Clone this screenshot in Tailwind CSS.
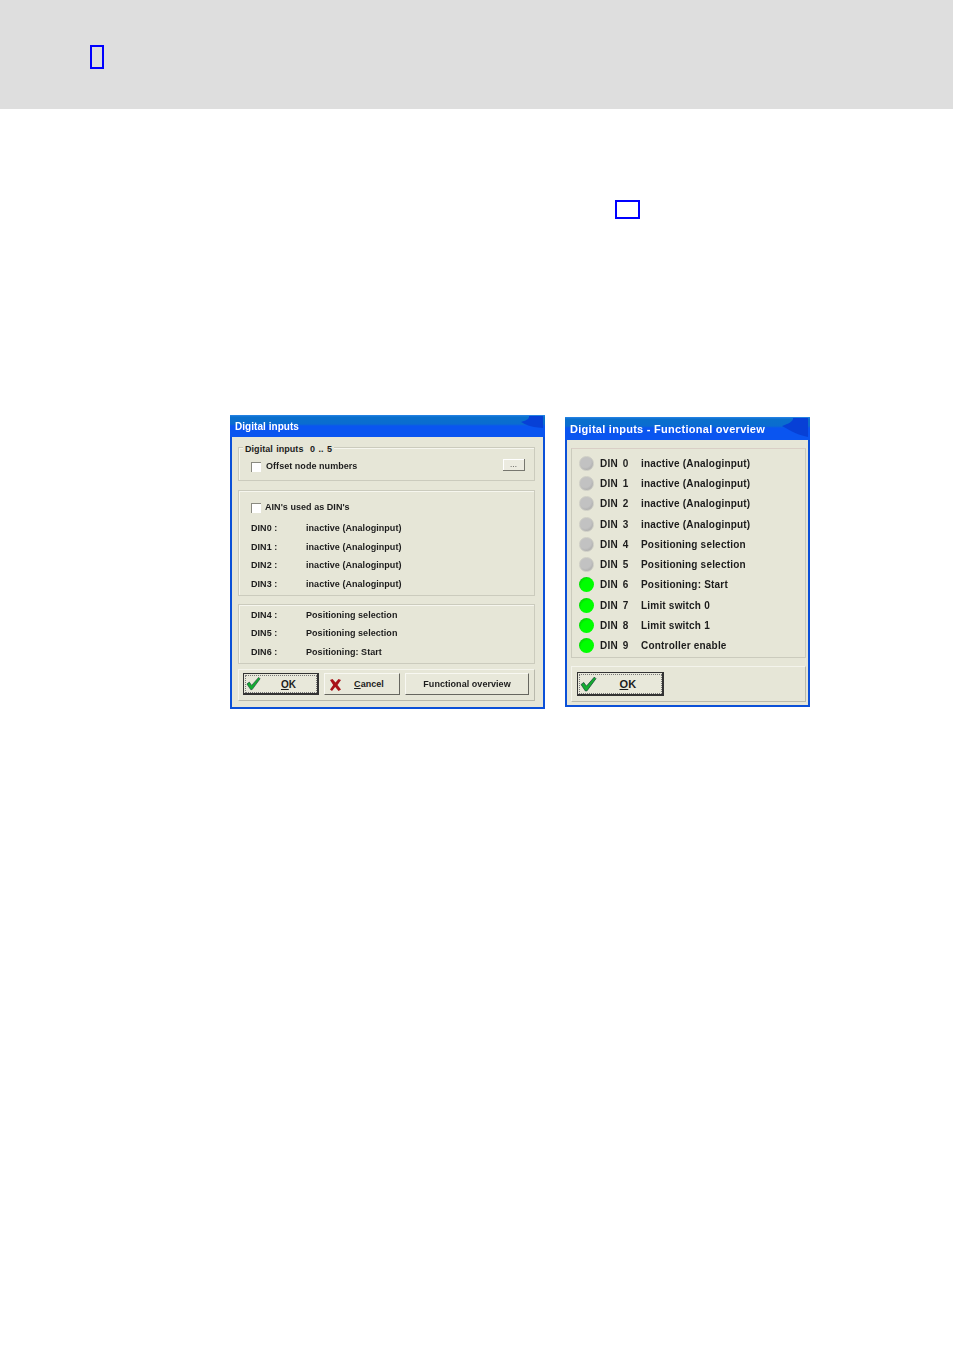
<!DOCTYPE html>
<html lang="en">
<head>
    <meta charset="UTF-8">
    <meta name="viewport" content="width=device-width, initial-scale=1.0">
    <title>Digital inputs</title>
    <script src="https://cdn.jsdelivr.net/npm/@tailwindcss/browser@4"></script>
</head>
<body class="bg-white h-[1348px] overflow-hidden font-['Liberation_Sans',sans-serif]">
    <header class="h-[109px] bg-[#dedede] pt-[45px] pl-[90px]">
        <div class="w-[14px] h-[24px] border-2 border-[#0000ff]"></div>
    </header>
    <div class="mt-[91px] ml-[615px] w-[25px] h-[19px] border-2 border-[#0000ff]"></div>

    <main class="mt-[196px] ml-[230px] flex items-start gap-[20px] font-bold text-[#1c1c1c] blur-[0.4px]">
        <!-- left dialog -->
        <section class="w-[315px] h-[294px] border-2 border-t-0 border-[#0b50d8] bg-[#e6e6d7] flex flex-col text-[9px] tracking-[0.005em]">
            <div class="relative h-[22px] shrink-0 -mx-[2px] bg-[linear-gradient(#2a86ea_0,#0a70cc_2px,#0a6cd0_9px,#0a55f0_11px,#0a55f0_100%)] pl-[5px] pt-[1px] flex items-center overflow-hidden text-white text-[10px]">
                Digital inputs
                <svg class="absolute right-0 top-0" width="26" height="22" viewBox="0 0 26 22"><path d="M24 1H10C11 4 6 6 2 7C6 9 10 12 24 13Z" fill="#0740d6"/></svg>
            </div>
            <div class="flex-1 pl-[6px] pr-[8px] pt-[10px] flex flex-col">
                <div class="relative h-[34px] border border-[#cbcbbd] shadow-[inset_1px_1px_0_#f6f6ee] flex items-center pl-[12px] pr-[9px] pt-[6px]">
                    <span class="absolute left-[4px] -top-[5px] bg-[#e6e6d7] px-[2px] leading-[12px] whitespace-pre [word-spacing:0.8px]">Digital inputs  0 .. 5</span>
                    <span class="w-[10px] h-[10px] bg-white border-t border-l border-[#8a8a80]"></span>
                    <span class="ml-[5px]">Offset node numbers</span>
                    <span class="ml-auto -mt-[4px] w-[22px] h-[12px] bg-[#ecebe0] border-r border-b border-[#77776f] shadow-[inset_1px_1px_0_#fff] flex items-center justify-center leading-[8px] text-[8px] font-normal">...</span>
                </div>
                <div class="mt-[9px] h-[106px] border border-[#cbcbbd] shadow-[inset_1px_1px_0_#f6f6ee] pl-[12px] pt-[12px] flex flex-col">
                    <div class="h-[10px] flex items-center">
                        <span class="w-[10px] h-[10px] bg-white border-t border-l border-[#8a8a80]"></span>
                        <span class="ml-[4px]">AIN's used as DIN's</span>
                    </div>
                    <div class="mt-[7px] flex h-[18.4px] items-center"><span class="w-[55px]">DIN0 :</span><span>inactive (Analoginput)</span></div>
                    <div class="flex h-[18.4px] items-center"><span class="w-[55px]">DIN1 :</span><span>inactive (Analoginput)</span></div>
                    <div class="flex h-[18.4px] items-center"><span class="w-[55px]">DIN2 :</span><span>inactive (Analoginput)</span></div>
                    <div class="flex h-[18.4px] items-center"><span class="w-[55px]">DIN3 :</span><span>inactive (Analoginput)</span></div>
                </div>
                <div class="mt-[8px] h-[60px] border border-[#cbcbbd] shadow-[inset_1px_1px_0_#f6f6ee] pl-[12px] pt-[1.5px] flex flex-col">
                    <div class="flex h-[18.4px] items-center"><span class="w-[55px]">DIN4 :</span><span>Positioning selection</span></div>
                    <div class="flex h-[18.4px] items-center"><span class="w-[55px]">DIN5 :</span><span>Positioning selection</span></div>
                    <div class="flex h-[18.4px] items-center"><span class="w-[55px]">DIN6 :</span><span>Positioning: Start</span></div>
                </div>
                <div class="mt-[5px] h-[32px] border border-[#f4f4ec] border-r-[#b9b9ac] border-b-[#b9b9ac] pl-[4px] pt-[3px] flex gap-[5px]">
                    <button class="relative w-[76px] h-[22px] pt-[1px] bg-[#e8e8da] border border-[#333] border-r-2 border-b-2 font-bold text-[10px] outline-1 -outline-offset-3 outline-dotted outline-[#777]">
                        <svg class="absolute left-[2px] top-[2px]" width="15" height="15" viewBox="0 0 16 15"><path d="M1 8L3.5 6L6 9.5L13.5 1L15 2.5L6.5 14H5Z" fill="#14ad30" stroke="#17453a" stroke-width="0.7"/></svg>
                        <span class="ml-[16px] underline">O</span><span>K</span>
                    </button>
                    <button class="relative w-[76px] h-[22px] pt-[1px] bg-[#e8e8da] border border-[#f8f8f2] border-r-[#66665f] border-b-[#66665f] font-bold">
                        <svg class="absolute left-[4px] top-[4px]" width="13" height="14" viewBox="0 0 13 13"><path d="M1 1.5L3.5 0.5L6.5 4L9.5 0.5L12 1.5L8.5 6.5L12 11L9.5 12.5L6.2 8.5L3 12.5L1 11L4.2 6.5Z" fill="#a81219"/></svg>
                        <span class="ml-[14px]"><span class="underline">C</span>ancel</span>
                    </button>
                    <button class="w-[124px] h-[22px] pt-[1px] bg-[#e8e8da] border border-[#f8f8f2] border-r-[#66665f] border-b-[#66665f] font-bold">Functional overview</button>
                </div>
            </div>
        </section>

        <!-- right dialog -->
        <section class="mt-[2px] w-[245px] h-[290px] border-2 border-t-0 border-[#0b50d8] bg-[#e6e6d7] flex flex-col text-[10px] tracking-[0.02em]">
            <div class="relative h-[23px] shrink-0 -mx-[2px] bg-[linear-gradient(#2a86ea_0,#0a70cc_2px,#0a6cd0_9px,#0a55f0_11px,#0a55f0_100%)] pl-[5px] pt-[2px] flex items-center overflow-hidden text-white text-[11px] tracking-[0.025em]">
                Digital inputs - Functional overview
                <svg class="absolute right-0 top-0" width="30" height="23" viewBox="0 0 30 23"><path d="M28 1H13C14 4 8 7 2 9C8 12 14 17 28 20Z" fill="#0740d6"/></svg>
            </div>
            <div class="flex-1 pl-[4px] pr-[2px] pt-[8px] flex flex-col">
                <div class="h-[210px] border border-[#cbcbbd] border-t-[#d9cfc6] pl-[7px] pt-[4px] flex flex-col">
                    <div class="flex h-[20.3px] items-center"><span class="w-[15px] h-[15px] rounded-full bg-[radial-gradient(circle_at_40%_35%,#c2c2c2_50%,#9e9e9e_100%)] border border-[#cdcdc5]"></span><span class="ml-[6px] w-[41px] [word-spacing:2px]">DIN 0</span><span>inactive (Analoginput)</span></div>
                    <div class="flex h-[20.3px] items-center"><span class="w-[15px] h-[15px] rounded-full bg-[radial-gradient(circle_at_40%_35%,#c2c2c2_50%,#9e9e9e_100%)] border border-[#cdcdc5]"></span><span class="ml-[6px] w-[41px] [word-spacing:2px]">DIN 1</span><span>inactive (Analoginput)</span></div>
                    <div class="flex h-[20.3px] items-center"><span class="w-[15px] h-[15px] rounded-full bg-[radial-gradient(circle_at_40%_35%,#c2c2c2_50%,#9e9e9e_100%)] border border-[#cdcdc5]"></span><span class="ml-[6px] w-[41px] [word-spacing:2px]">DIN 2</span><span>inactive (Analoginput)</span></div>
                    <div class="flex h-[20.3px] items-center"><span class="w-[15px] h-[15px] rounded-full bg-[radial-gradient(circle_at_40%_35%,#c2c2c2_50%,#9e9e9e_100%)] border border-[#cdcdc5]"></span><span class="ml-[6px] w-[41px] [word-spacing:2px]">DIN 3</span><span>inactive (Analoginput)</span></div>
                    <div class="flex h-[20.3px] items-center"><span class="w-[15px] h-[15px] rounded-full bg-[radial-gradient(circle_at_40%_35%,#c2c2c2_50%,#9e9e9e_100%)] border border-[#cdcdc5]"></span><span class="ml-[6px] w-[41px] [word-spacing:2px]">DIN 4</span><span>Positioning selection</span></div>
                    <div class="flex h-[20.3px] items-center"><span class="w-[15px] h-[15px] rounded-full bg-[radial-gradient(circle_at_40%_35%,#c2c2c2_50%,#9e9e9e_100%)] border border-[#cdcdc5]"></span><span class="ml-[6px] w-[41px] [word-spacing:2px]">DIN 5</span><span>Positioning selection</span></div>
                    <div class="flex h-[20.3px] items-center"><span class="w-[15px] h-[15px] rounded-full bg-[radial-gradient(circle_at_62%_65%,#00ff00_52%,#0aa80a_100%)]"></span><span class="ml-[6px] w-[41px] [word-spacing:2px]">DIN 6</span><span>Positioning: Start</span></div>
                    <div class="flex h-[20.3px] items-center"><span class="w-[15px] h-[15px] rounded-full bg-[radial-gradient(circle_at_62%_65%,#00ff00_52%,#0aa80a_100%)]"></span><span class="ml-[6px] w-[41px] [word-spacing:2px]">DIN 7</span><span>Limit switch 0</span></div>
                    <div class="flex h-[20.3px] items-center"><span class="w-[15px] h-[15px] rounded-full bg-[radial-gradient(circle_at_62%_65%,#00ff00_52%,#0aa80a_100%)]"></span><span class="ml-[6px] w-[41px] [word-spacing:2px]">DIN 8</span><span>Limit switch 1</span></div>
                    <div class="flex h-[20.3px] items-center"><span class="w-[15px] h-[15px] rounded-full bg-[radial-gradient(circle_at_62%_65%,#00ff00_52%,#0aa80a_100%)]"></span><span class="ml-[6px] w-[41px] [word-spacing:2px]">DIN 9</span><span>Controller enable</span></div>
                </div>
                <div class="mt-[8px] h-[36px] border border-[#f4f4ec] border-r-[#b9b9ac] border-b-[#b9b9ac] pl-[5px] pt-[5px]">
                    <button class="relative w-[87px] h-[24px] pt-[1px] bg-[#e8e8da] border border-[#333] border-r-2 border-b-2 font-bold text-[11px] outline-1 -outline-offset-3 outline-dotted outline-[#777]">
                        <svg class="absolute left-[2px] top-[3px]" width="17" height="16" viewBox="0 0 16 15"><path d="M1 8L3.5 6L6 9.5L13.5 1L15 2.5L6.5 14H5Z" fill="#14ad30" stroke="#17453a" stroke-width="0.7"/></svg>
                        <span class="ml-[16px] underline">O</span><span>K</span>
                    </button>
                </div>
            </div>
        </section>
    </main>
</body>
</html>
